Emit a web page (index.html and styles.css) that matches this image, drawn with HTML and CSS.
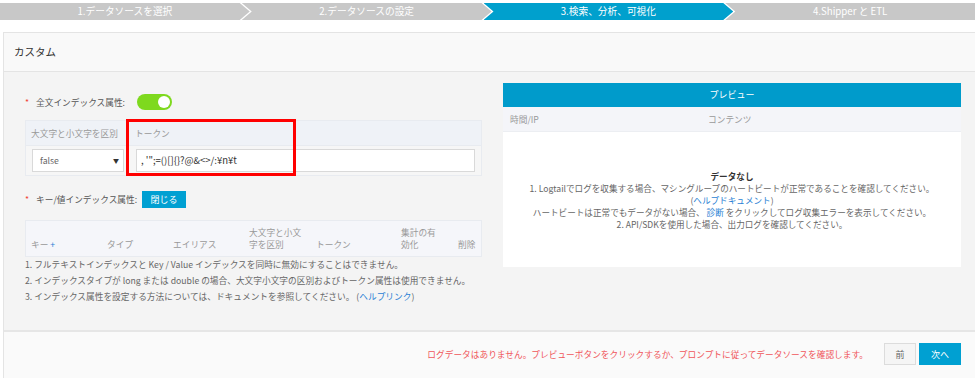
FILE: index.html
```html
<!DOCTYPE html>
<html lang="ja">
<head>
    <meta charset="UTF-8">
    <meta name="viewport" content="width=device-width,initial-scale=1.0">
    <title>カスタム</title>
    <link rel="stylesheet" href="styles.css">
</head>
<body>
<!--steps-->
<div class="steps">
    <div class="step first">1.データソースを選択</div>
    <div class="step">2.データソースの設定</div>
    <div class="step active">3.検索、分析、可視化</div>
    <div class="step last">4.Shipper と ETL</div>
</div>

<div class="card">
    <div class="card-head">カスタム</div>
    <div class="card-body">
        <div class="left">
            <div class="field">
                <span class="req">*</span>
                <span class="label">全文インデックス属性:</span>
                <span class="toggle"><span class="knob"></span></span>
            </div>

            <div class="table1">
                <div class="th">大文字と小文字を区別</div>
                <div class="th">トークン</div>
                <div class="td">
                    <div class="select">false<span class="caret">▼</span></div>
                </div>
                <div class="td">
                    <div class="input">, '";=()[]{}?@&amp;&lt;&gt;/:¥n¥t</div>
                </div>
                <div class="mark"></div>
            </div>

            <div class="field field2">
                <span class="req">*</span>
                <span class="label">キー/値インデックス属性:</span>
                <button class="btn-close">閉じる</button>
            </div>

            <div class="table2">
                <div class="th2">キー <span class="plus">+</span></div>
                <div class="th2">タイプ</div>
                <div class="th2">エイリアス</div>
                <div class="th2 wrap">大文字と小文字を区別</div>
                <div class="th2">トークン</div>
                <div class="th2 wrap2">集計の有効化</div>
                <div class="th2">削除</div>
            </div>

            <div class="notes">
                <p>1. フルテキストインデックスと Key / Value インデックスを同時に無効にすることはできません。</p>
                <p>2. インデックスタイプが long または double の場合、大文字小文字の区別およびトークン属性は使用できません。</p>
                <p>3. インデックス属性を設定する方法については、ドキュメントを参照してください。 (<a href="#">ヘルプリンク</a>)</p>
            </div>
        </div>

        <div class="preview">
            <div class="pv-head">プレビュー</div>
            <div class="pv-sub">
                <span class="col-time">時間/IP</span>
                <span>コンテンツ</span>
            </div>
            <div class="pv-body">
                <p class="empty">データなし</p>
                <p>1. Logtailでログを収集する場合、マシングループのハートビートが正常であることを確認してください。</p>
                <p>(<a href="#">ヘルプドキュメント</a>)</p>
                <p>ハートビートは正常でもデータがない場合、 <a href="#">診断</a> をクリックしてログ収集エラーを表示してください。</p>
                <p>2. API/SDKを使用した場合、出力ログを確認してください。</p>
            </div>
        </div>
    </div>
    <div class="card-foot">
        <span class="warn">ログデータはありません。プレビューボタンをクリックするか、プロンプトに従ってデータソースを確認します。</span>
        <button class="btn-prev">前</button>
        <button class="btn-next">次へ</button>
    </div>
</div>
</body>
</html>
```

FILE: styles.css
```css
* {
    box-sizing: border-box;
    margin: 0;
    padding: 0;
}
body {
    background: #fff;
    font-family: "Noto Sans CJK JP", "Noto Sans", sans-serif;
    font-size: 8.7px;
    color: #666;
    overflow: hidden;
}
a {
    color: #2a7fd4;
    text-decoration: none;
}

/* steps */
.steps {
    display: flex;
    margin-top: 3px;
    height: 17px;
}
.step {
    flex: 1;
    background: #c8c8c8;
    color: #fff;
    font-size: 9.7px;
    line-height: 17px;
    text-align: center;
    margin-right: -8px;
    clip-path: polygon(0 0, calc(100% - 10px) 0, 100% 50%, calc(100% - 10px) 100%, 0 100%, 10px 50%);
}
.step.first {
    clip-path: polygon(0 0, calc(100% - 10px) 0, 100% 50%, calc(100% - 10px) 100%, 0 100%);
}
.step.last {
    margin-right: 0;
    clip-path: polygon(0 0, 100% 0, 100% 100%, 0 100%, 10px 50%);
}
.step.active {
    background: #00a0cd;
}

/* card */
.card {
    margin: 12px 0 0 3px;
    border: 1px solid #e4e4e4;
    border-right: none;
}
.card-head {
    height: 39px;
    line-height: 38px;
    padding-left: 10px;
    font-size: 10.5px;
    color: #333;
    background: #f9f9f9;
    border-bottom: 1px solid #e4e4e4;
}
.card-body {
    display: flex;
    gap: 21px;
    height: 258px;
    padding: 11px 0 0 21px;
    background: #f4f4f4;
}
.left {
    width: 457px;
    padding-top: 11px;
}
.field {
    display: flex;
    align-items: center;
    height: 16px;
}
.req {
    color: #f04134;
    width: 11px;
}
.label {
    color: #555;
}
.toggle {
    position: relative;
    width: 35px;
    height: 16px;
    margin-left: 12px;
    border-radius: 8px;
    background: #7ed91e;
}
.knob {
    position: absolute;
    right: 2px;
    top: 2px;
    width: 12px;
    height: 12px;
    border-radius: 50%;
    background: #fff;
}

.table1 {
    position: relative;
    display: grid;
    grid-template-columns: 104px 1fr;
    margin-top: 10px;
    border: 1px solid #e8ebf0;
    background: #f6f6f6;
}
.th {
    height: 25px;
    line-height: 25px;
    padding-left: 5px;
    color: #999;
    background: #eff2f7;
    border-bottom: 1px solid #e8ebf0;
}
.td {
    padding: 3px 6px 3px 6px;
}
.select {
    position: relative;
    height: 23px;
    line-height: 21px;
    padding-left: 7px;
    background: #fff;
    border: 1px solid #d9d9d9;
    color: #666;
}
.caret {
    position: absolute;
    right: 4px;
    top: 0;
    font-size: 6px;
    color: #333;
}
.input {
    height: 23px;
    line-height: 21px;
    padding-left: 4px;
    background: #fff;
    border: 1px solid #d9d9d9;
    color: #333;
    font-size: 9.5px;
}
.mark {
    position: absolute;
    left: 100px;
    top: -2px;
    width: 170px;
    height: 57px;
    border: 3px solid #f00;
}

.field2 {
    margin-top: 15px;
    height: 17px;
}
.btn-close {
    margin-left: 5px;
    width: 44px;
    height: 17px;
    border: none;
    background: #00a0d2;
    color: #fff;
    font-family: inherit;
    font-size: 9px;
}

.table2 {
    display: grid;
    grid-template-columns: 76px 66px 76px 67px 85px 57px 1fr;
    align-items: end;
    margin-top: 12px;
    height: 37px;
    padding-bottom: 5px;
    border: 1px solid #e8ebf0;
    background: #f5f6fa;
}
.th2 {
    padding-left: 5px;
    color: #999;
    line-height: 12px;
}
.th2.wrap {
    width: 60px;
}
.th2.wrap2 {
    width: 42px;
}
.plus {
    color: #2a7fd4;
}

.notes p {
    line-height: 16px;
    color: #666;
}

/* preview */
.preview {
    width: 458px;
    height: 184px;
}
.pv-head {
    height: 24px;
    line-height: 24px;
    text-align: center;
    color: #fff;
    font-size: 9px;
    background: #009bcb;
}
.pv-sub {
    display: flex;
    height: 25px;
    line-height: 25px;
    padding-left: 7px;
    color: #999;
    background: #f4f5f9;
    border-bottom: 1px solid #eceef2;
}
.col-time {
    width: 198px;
}
.pv-body {
    height: 135px;
    padding-top: 38px;
    background: #fff;
    text-align: center;
    font-size: 8.6px;
    line-height: 12px;
    color: #666;
}
.pv-body .empty {
    font-weight: bold;
    color: #333;
}

/* footer */
.card-foot {
    display: flex;
    align-items: center;
    justify-content: flex-end;
    height: 60px;
    padding: 0 14px 14px 0;
    background: #fafafa;
    border-top: 2px solid #e6e6e6;
}
.warn {
    color: #f0565a;
    font-size: 8.7px;
    margin-right: 16px;
}
.btn-prev, .btn-next {
    height: 22px;
    border: 1px solid #dcdcdc;
    font-family: inherit;
    font-size: 9px;
}
.btn-prev {
    width: 32px;
    background: #f5f5f5;
    color: #666;
}
.btn-next {
    width: 42px;
    margin-left: 3px;
    background: #00a0d2;
    border-color: #00a0d2;
    color: #fff;
}
```
